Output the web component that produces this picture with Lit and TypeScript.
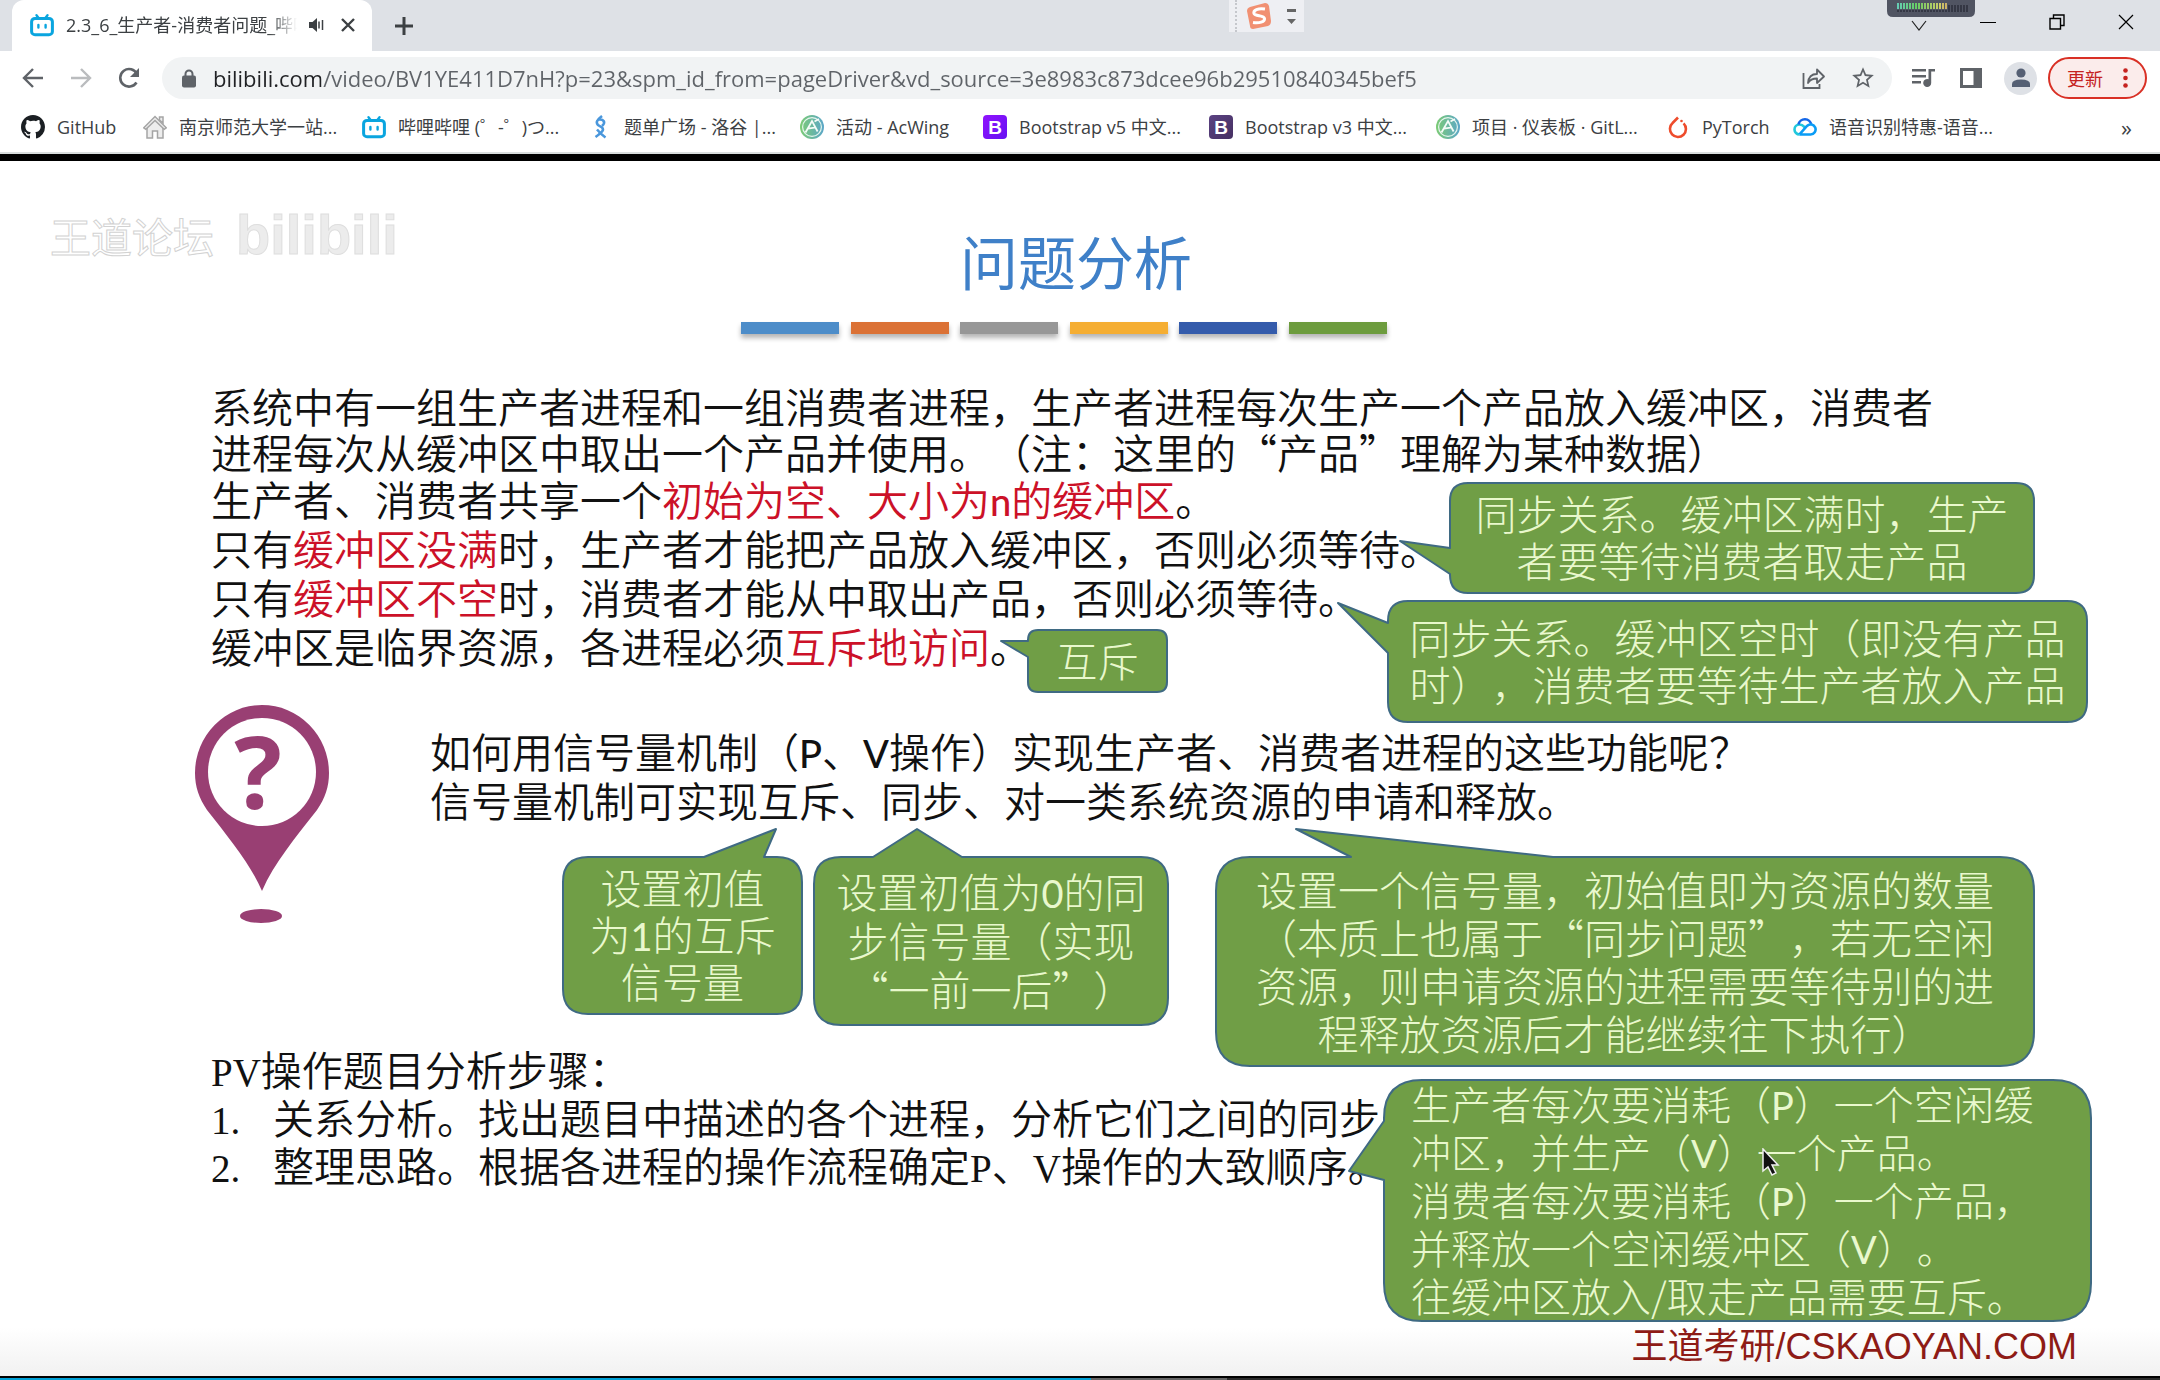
import { LitElement, html, css, svg } from "lit";
import { customElement, property } from "lit/decorators.js";

type Tail = { side: "left" | "top"; from: number; to: number; tipX: number; tipY: number };
type Note = {
  x: number; y: number; w: number; h: number; r: number;
  lh: number; align: "center" | "left"; tail: Tail; lines: unknown[];
};

const L = (s: string) => html`<span class="lat">${s}</span>`;

const NOTES: Note[] = [
  { x: 1450, y: 322, w: 584, h: 110, r: 18, lh: 47, align: "center",
    tail: { side: "left", from: 65, to: 91, tipX: -50, tipY: 58 },
    lines: ["同步关系。缓冲区满时，生产", "者要等待消费者取走产品"] },
  { x: 1388, y: 440, w: 699, h: 121, r: 20, lh: 47, align: "center",
    tail: { side: "left", from: 22, to: 52, tipX: -50, tipY: 2 },
    lines: ["同步关系。缓冲区空时（即没有产品", "时），消费者要等待生产者放入产品"] },
  { x: 1028, y: 469, w: 139, h: 62, r: 10, lh: 47, align: "center",
    tail: { side: "left", from: 11, to: 27, tipX: -27, tipY: 11 },
    lines: ["互斥"] },
  { x: 563, y: 696, w: 239, h: 157, r: 25, lh: 47, align: "center",
    tail: { side: "top", from: 141, to: 201, tipX: 213, tipY: -28 },
    lines: ["设置初值", html`为${L("1")}的互斥`, "信号量"] },
  { x: 814, y: 696, w: 354, h: 168, r: 27, lh: 49, align: "center",
    tail: { side: "top", from: 59, to: 148, tipX: 103, tipY: -28 },
    lines: [html`设置初值为${L("0")}的同`, "步信号量（实现", "“一前一后”）"] },
  { x: 1216, y: 696, w: 818, h: 209, r: 34, lh: 48, align: "center",
    tail: { side: "top", from: 135, to: 337, tipX: 80, tipY: -28 },
    lines: ["设置一个信号量，初始值即为资源的数量", "（本质上也属于“同步问题”，若无空闲", "资源，则申请资源的进程需要等待别的进", "程释放资源后才能继续往下执行）"] },
  { x: 1384, y: 919, w: 707, h: 241, r: 38, lh: 48, align: "left",
    tail: { side: "left", from: 41, to: 100, tipX: -35, tipY: 91 },
    lines: [html`生产者每次要消耗（${L("P")}）一个空闲缓`, html`冲区，并生产（${L("V")}）一个产品。`, html`消费者每次要消耗（${L("P")}）一个产品，`, html`并释放一个空闲缓冲区（${L("V")}）。`, "往缓冲区放入/取走产品需要互斥。"] },
];

@customElement("slide-callout")
class SlideCallout extends LitElement {
  @property({ attribute: false }) note!: Note;
  static styles = css`
    :host { display: block; }
    .shape { position: absolute; inset: 0; width: 100%; height: 100%; overflow: visible; }
    .shape path { fill: #709e46; stroke: #3f6a83; stroke-width: 2; stroke-linejoin: round; }
    .words { position: relative; display: flex; flex-direction: column; justify-content: center; height: 100%; padding-bottom: 4px; box-sizing: border-box; white-space: nowrap; font-size: 41px; font-weight: 300; color: #e9f8cd; }
    .center { align-items: center; }
    .left { align-items: flex-start; padding-left: 27px; font-size: 40px; }
    .lat { font-family: Lato, sans-serif; font-size: 38px; font-weight: 400; line-height: 1; }
  `;
  private outline() {
    const { w, h, r, tail: t } = this.note;
    const top = t.side === "top" ? `L${t.from} 0 L${t.tipX} ${t.tipY} L${t.to} 0` : "";
    const left = t.side === "left" ? `L0 ${t.to} L${t.tipX} ${t.tipY} L0 ${t.from}` : "";
    const low = t.side === "left" && t.to > h - r ? h - t.to : r;
    return `M${r} 0 ${top} L${w - r} 0 Q${w} 0 ${w} ${r} L${w} ${h - r} Q${w} ${h} ${w - r} ${h} L${r} ${h} Q0 ${h} 0 ${h - low} ${left} L0 ${r} Q0 0 ${r} 0Z`;
  }
  render() {
    const n = this.note;
    return html`<svg class="shape" aria-hidden="true"><path d=${this.outline()}></path></svg>
      <div class="words ${n.align}" style="line-height:${n.lh}px">${n.lines.map((l) => html`<div>${l}</div>`)}</div>`;
  }
}

const biliIcon = svg`<g fill="none" stroke="#0aa5df" stroke-linecap="round" stroke-linejoin="round"><path stroke-width="2.4" d="M6.5 2.2l2.3 3M17.5 2.2l-2.3 3"/><rect x="1.6" y="5.4" width="20.8" height="16.4" rx="3.4" stroke-width="3"/><path stroke-width="2.4" d="M8.4 12v2.6M15.6 12v2.6"/></g>`;
const acIcon = svg`<defs><linearGradient id="ac"><stop offset="0" stop-color="#7ccb74"/><stop offset="1" stop-color="#5ba6c9"/></linearGradient></defs><circle cx="12" cy="12" r="12" fill="url(#ac)"/><circle cx="12" cy="12" r="9.4" fill="none" stroke="#e6f6ee" stroke-width="1.2"/><path d="M5.5 17.5L12 6l5.6 10.5M8 13.6l8-1.2M14.5 6.5L19 4" fill="none" stroke="#f4fbf7" stroke-width="1.8"/>`;
const bIcon = (c1: string, c2: string, id: string) => svg`<defs><linearGradient id=${id} x2="1" y2="1"><stop offset="0" stop-color=${c1}/><stop offset="1" stop-color=${c2}/></linearGradient></defs><rect width="24" height="24" rx="4" fill="url(#${id})"/><text x="12" y="19" text-anchor="middle" font-family="Liberation Sans" font-weight="700" font-size="19" fill="#fff">B</text>`;

const BOOKMARKS = [
  { t: "GitHub", i: svg`<path transform="scale(1.5)" fill="#1b1f23" d="M8 0C3.58 0 0 3.58 0 8c0 3.54 2.29 6.53 5.47 7.59.4.07.55-.17.55-.38 0-.19-.01-.82-.01-1.49-2.01.37-2.53-.49-2.69-.94-.09-.23-.48-.94-.82-1.13-.28-.15-.68-.52-.01-.53.63-.01 1.08.58 1.23.82.72 1.21 1.87.87 2.33.66.07-.52.28-.87.51-1.07-1.78-.2-3.64-.89-3.64-3.95 0-.87.31-1.59.82-2.15-.08-.2-.36-1.02.08-2.12 0 0 .67-.21 2.2.82a7.6 7.6 0 012-.27c.68 0 1.36.09 2 .27 1.53-1.04 2.2-.82 2.2-.82.44 1.1.16 1.92.08 2.12.51.56.82 1.27.82 2.15 0 3.07-1.87 3.75-3.65 3.95.29.25.54.73.54 1.48 0 1.07-.01 1.93-.01 2.2 0 .21.15.46.55.38A8.01 8.01 0 0016 8c0-4.42-3.58-8-8-8z"/>` },
  { t: "南京师范大学一站...", i: svg`<g fill="#ededed" stroke="#a5a5a5" stroke-width="1.5"><path d="M16.500 2h3.500v6l-3.500-3zM4 12v11h5.500v-7h5v7H20V12l-8-8z"/><path d="M.8 12.800L12 1.500l11.200 11.300-2 1.500L12 5.500l-9.200 8.800z"/></g>` },
  { t: "哔哩哔哩 (゜-゜)つ...", i: biliIcon },
  { t: "题单广场 - 洛谷 |...", i: svg`<g fill="none" stroke="#4a97dc" stroke-width="2.600"><path d="M14 1C9 5 7.500 7.500 10 10l4 2.500c2 2 1.500 4-6.500 9.500"/><path d="M10.500 4.500c5.500-.5 7.500 3 3.500 6.500M9 14.500c3 3.500 5.500 6 8.500 8"/></g>` },
  { t: "活动 - AcWing", i: acIcon },
  { t: "Bootstrap v5 中文...", i: bIcon("#9013fe", "#6610f2", "b5") },
  { t: "Bootstrap v3 中文...", i: bIcon("#5b4282", "#463062", "b3") },
  { t: "项目 · 仪表板 · GitL...", i: acIcon },
  { t: "PyTorch", i: svg`<path d="M12 2.500L6.600 8a8 8 0 1011 .3" fill="none" stroke="#ee4c2c" stroke-width="2.600"/><circle cx="15.500" cy="6" r="1.300" fill="#ee4c2c"/>` },
  { t: "语音识别特惠-语音...", i: svg`<g fill="none" stroke-width="2.600"><path d="M6.500 19.500a5 5 0 110-10c3 0 4 1.500 6 3.500" stroke="#22c8dc"/><path d="M5.500 9.500a6.500 6.500 0 0112.800.3" stroke="#1467e8"/><path d="M6.500 19.500h11a5 5 0 10-3.500-8.500l-7.500 8.300" stroke="#0a9cf5"/></g>` },
];

@customElement("app-root")
class AppRoot extends LitElement {
  static styles = css`
    :host { display: block; font-family: "Open Sans", "Noto Sans CJK SC", sans-serif; color: #3c4043; }
    * { box-sizing: border-box; }
    button { border: 0; background: none; padding: 0; margin: 0; font: inherit; color: inherit; display: flex; align-items: center; justify-content: center; }
    svg { display: block; flex: none; }
    .page { display: flex; flex-direction: column; min-height: 100vh; background: #000; }

    .strip { position: relative; display: flex; align-items: center; height: 51px; padding-left: 12px; background: #dee1e6; }
    .tab { display: flex; align-items: center; width: 360px; height: 51px; padding: 0 16px 2px 18px; background: #fff; border-radius: 12px 12px 0 0; font-size: 18px; }
    .tab .name { flex: 1; margin: 0 12px; overflow: hidden; white-space: nowrap; line-height: 28px; -webkit-mask-image: linear-gradient(90deg, #000 88%, transparent); mask-image: linear-gradient(90deg, #000 88%, transparent); }
    .tab .shut { margin-left: 16px; }
    .plus { width: 44px; height: 44px; margin-left: 10px; }
    .win { display: flex; margin-left: auto; height: 51px; padding-bottom: 8px; align-items: center; }
    .win button { width: 69px; height: 42px; }
    .ime { position: absolute; left: 1229px; top: 0; display: flex; align-items: center; gap: 16px; width: 75px; height: 32px; padding-left: 6px; background: #eeeff3; }
    .ime .grip { width: 0; height: 32px; border-left: 2px dotted #c5c7cc; margin-right: -6px; }
    .meter { position: absolute; left: 1887px; top: 0; }

    .bar { display: flex; align-items: center; height: 56px; padding: 0 13px 2px 12px; background: #fff; }
    .nav { display: flex; gap: 6px; }
    .nav button { width: 42px; height: 42px; }
    .omni { display: flex; flex: 1; align-items: center; height: 42px; margin-left: 12px; padding: 0 16px 0 20px; border-radius: 21px; background: #f1f3f4; }
    .omni input { flex: 1; min-width: 0; height: 42px; margin-left: 17px; padding: 0; border: 0; outline: 0; font: 22px "Open Sans", sans-serif; color: transparent; background: linear-gradient(90deg, #202124 108px, #5f6368 108px); -webkit-background-clip: text; background-clip: text; }
    .omni .acts { display: flex; gap: 24px; }
    .tools { display: flex; align-items: center; gap: 22px; margin-left: 19px; }
    .face { width: 33px; height: 33px; border-radius: 50%; background: #dee1e6; }
    .tools .update { gap: 20px; width: 99px; height: 42px; margin-left: -11px; border: 2px solid #d93025; border-radius: 21px; background: #fbeceb; color: #c5221f; font-size: 18px; }

    .marks { display: grid; grid-template-columns: 122px 219px 226px 212px 183px 226px 227px 230px 127px 1fr auto; align-items: center; height: 47px; padding: 0 28px 6px 21px; background: #fff; border-bottom: 2px solid #d9dddd; font-size: 18px; }
    .marks a { display: flex; align-items: center; gap: 12px; color: #3c4043; text-decoration: none; white-space: nowrap; line-height: 28px; }
    .more { font-size: 22px; }

    .slide { position: relative; flex: 1; margin-top: 7px; padding: 62px 0 0 211px; background: linear-gradient(#fff 96%, #f1f1f1); font-size: 41px; font-weight: 350; line-height: 49px; color: #111; overflow: hidden; text-spacing-trim: space-all; }
    .cjk { font-family: "Noto Sans CJK SC", sans-serif; }
    .slide p, .slide h1, .slide ol { margin: 0; white-space: nowrap; }
    .slide h1 { width: 646px; margin-left: 530px; padding-left: 24px; text-align: center; font-size: 58px; line-height: 74px; font-weight: 400; color: #3f80c8; }
    .dashes { display: flex; justify-content: space-between; width: 646px; margin: 25px 0 48px 530px; }
    .dash { width: 98px; height: 12px; box-shadow: 0 4px 5px #b5b5b5; }
    .intro { line-height: 46px; }
    .hot { color: #cc1128; }
    .lat { font-family: Lato, sans-serif; font-size: 38px; font-weight: 500; line-height: 1; }
    .mono { font-family: "Liberation Serif", serif; font-size: 39px; line-height: 1; }
    .ask { padding: 56px 0 0 219px; }
    .steps { padding-top: 221px; }
    .steps ol { padding: 0; list-style: none; line-height: 48px; }
    .steps li { display: grid; grid-template-columns: 62px auto; align-items: baseline; }
    .steps .lead { line-height: 47px; }
    .mark { position: absolute; left: 50px; top: 34px; display: flex; align-items: center; gap: 22px; color: #fff; -webkit-text-stroke: 1px #d2d2d2; font-weight: 400; }
    .mark b { font: 700 56px/80px "Liberation Sans", sans-serif; color: #ececec; -webkit-text-stroke: 1px #dedede; }
    .pin { position: absolute; left: 194px; top: 542px; }
    .note { position: absolute; }
    .brand { position: absolute; right: 83px; bottom: 5px; color: #8e1b16; font: 400 36px/48px "Liberation Sans", "Noto Sans CJK SC", sans-serif; }
    .cursor { position: absolute; left: 1762px; top: 987px; }

    .seek { display: grid; grid-template-columns: 1091fr 136fr 933fr; height: 4px; padding-top: 2px; background: #000; }
    .played { background: #00a1d6; }
    .loaded { background: #666; }
    .rest { background: #2b2b2b; }
  `;

  private strip() {
    return html`<header class="strip">
      <div class="tab">
        <svg width="24" height="24" viewBox="0 0 24 24">${biliIcon}</svg>
        <span class="name">2.3_6_生产者-消费者问题_哔哩</span>
        <svg width="15" height="16" viewBox="0 0 15 16" fill="#3c4043"><path d="M0 5h3.500L8 1v14l-4.500-4H0z"/><path d="M10 4.500v7M13.500 3v10" stroke="#3c4043" stroke-width="1.500"/></svg>
        <button class="shut" aria-label="关闭标签页"><svg width="16" height="16"><path d="M2 2l12 12M14 2L2 14" stroke="#3c4043" stroke-width="2.400"/></svg></button>
      </div>
      <button class="plus" aria-label="新标签页"><svg width="20" height="20"><path d="M10 1v18M1 10h18" stroke="#3c4043" stroke-width="3"/></svg></button>
      <div class="win">
        <button aria-label="搜索标签页"><svg width="16" height="20"><path d="M1 9l7 9 7-9" fill="none" stroke="#222" stroke-width="1.200"/></svg></button>
        <button aria-label="最小化"><svg width="16" height="16"><path d="M0 8.500h16" stroke="#000"/></svg></button>
        <button aria-label="还原"><svg width="16" height="16" fill="none" stroke="#000" stroke-width="1.400"><path d="M1 4.500h10.500V15H1zM4.500 4.500V1H15v10.500h-3.500"/></svg></button>
        <button aria-label="关闭"><svg width="16" height="16"><path d="M1 1l14 14M15 1L1 15" stroke="#000" stroke-width="1.200"/></svg></button>
      </div>
      <div class="ime">
        <span class="grip"></span>
        <svg width="24" height="26" viewBox="0 0 24 26"><path d="M3 4L18 0q3 0 4 3l2 15q0 4-3 5L6 26q-3 0-3-3L0 8q0-3 3-4z" fill="#f19072"/><path d="M18 6C11 5 6 7 7 10.500c1 3 10 1.500 10.500 5C18 19 12 20.500 6 19.500" fill="none" stroke="#fff" stroke-width="3"/></svg>
        <svg width="9" height="18" fill="#666"><path d="M0 2h9v3H0zM0 12h9l-4.500 5z"/></svg>
      </div>
      <svg class="meter" width="89" height="19"><path d="M0 0h88v11q0 6-6 6H6q-6 0-6-6z" fill="#505462"/>
        ${Array.from({ length: 24 }, (_, i) => svg`<rect x=${10 + i * 3} y=${i < 17 ? 3 : 5} width="2" height=${i < 17 ? 6 : 5} fill=${i < 17 ? `hsl(${165 - i * 7.5} 50% 60%)` : "#343744"} /><rect x=${10 + i * 3} y="10" width="2" height="2" fill="#343744"/>`)}
      </svg>
    </header>`;
  }

  private bar() {
    const g = "#5f6368";
    return html`<div class="bar">
      <nav class="nav">
        <button aria-label="后退"><svg width="22" height="22"><path d="M21 11H2M11 2l-9 9 9 9" fill="none" stroke=${g} stroke-width="2.400"/></svg></button>
        <button aria-label="前进"><svg width="22" height="22"><path d="M1 11h19M11 2l9 9-9 9" fill="none" stroke="#babcbe" stroke-width="2.400"/></svg></button>
        <button aria-label="重新加载"><svg width="22" height="22"><path d="M18.500 15.500A8.800 8.800 0 1119 7" fill="none" stroke=${g} stroke-width="2.600"/><path d="M21 1v9h-9z" fill=${g}/></svg></button>
      </nav>
      <div class="omni">
        <svg width="14" height="19" viewBox="0 0 14 19"><rect y="6.500" width="14" height="12" rx="2" fill=${g}/><path d="M3.500 8V5a3.500 3.500 0 017 0v3" fill="none" stroke=${g} stroke-width="2"/></svg>
        <input aria-label="地址栏" value="bilibili.com/video/BV1YE411D7nH?p=23&spm_id_from=pageDriver&vd_source=3e8983c873dcee96b29510840345bef5" />
        <div class="acts">
          <button aria-label="分享"><svg width="24" height="22" fill="none" stroke=${g} stroke-width="1.800"><path d="M1.500 6v15h16v-4"/><path d="M6 16c.5-6 4-9 9-9V2.500l7 7-7 6.500v-4.500c-4 0-7 1-9 4.500z" stroke-linejoin="round"/></svg></button>
          <button aria-label="收藏"><svg width="26" height="26" viewBox="0 0 24 24"><path d="M22 9.240l-7.190-.62L12 2 9.190 8.630 2 9.240l5.460 4.730L5.820 21 12 17.270 18.180 21l-1.630-7.030L22 9.240zM12 15.400l-3.760 2.270 1-4.280-3.320-2.880 4.380-.38L12 6.100l1.710 4.040 4.380.38-3.320 2.880 1 4.280L12 15.400z" fill=${g}/></svg></button>
        </div>
      </div>
      <div class="tools">
        <button aria-label="媒体控制"><svg width="27" height="22" fill=${g}><path d="M1 2h14v2.400H1zM1 8h14v2.400H1zM1 14h9v2.400H1zM17.500 2H24v2.600h-3.800V16a4 4 0 11-2.700-3.800z"/></svg></button>
        <button aria-label="侧边栏"><svg width="22" height="20"><path d="M1.500 1.500h19v17h-19z" fill="#fff" stroke=${g} stroke-width="3"/><path d="M13.500 1H21v18h-7.500z" fill=${g}/></svg></button>
        <button class="face" aria-label="个人资料"><svg width="20" height="20" fill="#556074"><circle cx="10" cy="5" r="4.600"/><path d="M1 19v-3q0-4.500 9-4.500t9 4.500v3z"/></svg></button>
        <button class="update">更新<svg width="5" height="20" fill="#c5221f"><circle cx="2.500" cy="2.500" r="2.300"/><circle cx="2.500" cy="10" r="2.300"/><circle cx="2.500" cy="17.500" r="2.300"/></svg></button>
      </div>
    </div>`;
  }

  render() {
    return html`<div class="page">
      ${this.strip()}${this.bar()}
      <nav class="marks">
        ${BOOKMARKS.map((b) => html`<a href="#"><svg width="24" height="24" viewBox="0 0 24 24">${b.i}</svg><span>${b.t}</span></a>`)}
        <button class="more" aria-label="更多书签">»</button>
      </nav>
      <main class="slide cjk">
        <h1>问题分析</h1>
        <div class="dashes">${["#4d8dc9", "#db7236", "#979797", "#f5ae33", "#345bab", "#6d9c3e"].map((c) => html`<span class="dash" style="background:${c}"></span>`)}</div>
        <p class="intro">系统中有一组生产者进程和一组消费者进程，生产者进程每次生产一个产品放入缓冲区，消费者<br />进程每次从缓冲区中取出一个产品并使用。（注：这里的“产品”理解为某种数据）</p>
        <p>生产者、消费者共享一个<span class="hot">初始为空、大小为${L("n")}的缓冲区</span>。</p>
        <p>只有<span class="hot">缓冲区没满</span>时，生产者才能把产品放入缓冲区，否则必须等待。</p>
        <p>只有<span class="hot">缓冲区不空</span>时，消费者才能从中取出产品，否则必须等待。</p>
        <p>缓冲区是临界资源，各进程必须<span class="hot">互斥地访问</span>。</p>
        <section class="ask">
          <p>如何用信号量机制（${L("P")}、${L("V")}操作）实现生产者、消费者进程的这些功能呢？</p>
          <p>信号量机制可实现互斥、同步、对一类系统资源的申请和释放。</p>
        </section>
        <section class="steps">
          <p class="lead"><span class="mono">PV</span>操作题目分析步骤：</p>
          <ol>
            <li><span class="mono">1.</span><span>关系分析。找出题目中描述的各个进程，分析它们之间的同步</span></li>
            <li><span class="mono">2.</span><span>整理思路。根据各进程的操作流程确定<span class="mono">P</span>、<span class="mono">V</span>操作的大致顺序。</span></li>
          </ol>
        </section>
        <div class="mark"><span>王道论坛</span><b>bilibili</b></div>
        <svg class="pin" width="136" height="222" viewBox="0 0 136 222">
          <path d="M68 188C56 160 34 134 13 107 5 95 1 84 1 70a67 68 0 01134 0c0 14-4 25-12 37-21 27-43 53-55 81z" fill="#993f73"/>
          <circle cx="68" cy="69" r="54" fill="#fff"/>
          <text x="64" y="106" text-anchor="middle" font-family="Open Sans" font-weight="700" font-size="100" fill="#993f73">?</text>
          <ellipse cx="67" cy="213" rx="21" ry="7" fill="#993f73"/>
        </svg>
        ${NOTES.map((n) => html`<slide-callout class="note" .note=${n} style="left:${n.x}px;top:${n.y}px;width:${n.w}px;height:${n.h}px"></slide-callout>`)}
        <div class="brand">王道考研/CSKAOYAN.COM</div>
        <svg class="cursor" width="18" height="28"><path d="M1 1v22l5-4 4 8 4-2-4-8h6z" fill="#111" stroke="#eee" stroke-width="1.500"/></svg>
      </main>
      <div class="seek"><span class="played"></span><span class="loaded"></span><span class="rest"></span></div>
    </div>`;
  }
}
